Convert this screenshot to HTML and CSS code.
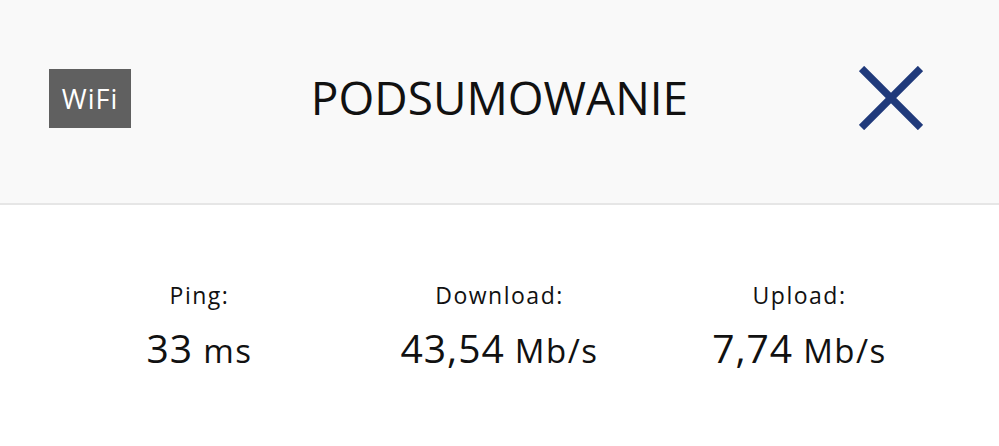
FILE: index.html
```html
<!DOCTYPE html>
<html lang="pl">
<head>
<meta charset="utf-8">
<title>Podsumowanie</title>
<link rel="stylesheet" href="styles.css">
</head>
<body>
<header class="header">
  <div class="header-left"><span class="badge">WiFi</span></div>
  <h1 class="title">PODSUMOWANIE</h1>
  <div class="header-right">
    <svg class="close" width="64" height="64" viewBox="0 0 64 64" aria-label="Zamknij">
      <path d="M2.5 2.5 L61.5 61.5 M61.5 2.5 L2.5 61.5" stroke="#203a7b" stroke-width="7.5" fill="none"/>
    </svg>
  </div>
</header>
<main class="stats">
  <div class="stat">
    <div class="label">Ping:</div>
    <div class="value"><span class="num">33</span><span class="unit">ms</span></div>
  </div>
  <div class="stat">
    <div class="label">Download:</div>
    <div class="value"><span class="num">43,54</span><span class="unit">Mb/s</span></div>
  </div>
  <div class="stat">
    <div class="label">Upload:</div>
    <div class="value"><span class="num">7,74</span><span class="unit">Mb/s</span></div>
  </div>
</main>
</body>
</html>
```
FILE: styles.css
```css
html, body {
  margin: 0;
  padding: 0;
  background: #ffffff;
  font-family: "Open Sans", "Noto Sans", sans-serif;
  color: #111111;
}

.header {
  box-sizing: border-box;
  height: 205px;
  background: #f9f9f9;
  border-bottom: 2px solid #e6e6e6;
  display: grid;
  grid-template-columns: 1fr auto 1fr;
  align-items: start;
  padding-top: 66px;
}

.header-left {
  display: flex;
  align-items: center;
  height: 64px;
  padding-left: 49px;
}

.badge {
  display: flex;
  align-items: center;
  justify-content: center;
  width: 82px;
  height: 59px;
  background: #606060;
  color: #ffffff;
  font-size: 27px;
  letter-spacing: 1px;
}

.title {
  margin: 0;
  height: 62px;
  display: flex;
  align-items: center;
  font-size: 46px;
  font-weight: 400;
  color: #111111;
}

.header-right {
  display: flex;
  justify-content: flex-end;
  padding-right: 76px;
}

.close {
  display: block;
}

.stats {
  display: grid;
  grid-template-columns: repeat(3, 300px);
  justify-content: center;
  padding-top: 75px;
}

.stat {
  display: flex;
  flex-direction: column;
  align-items: center;
}

.label {
  font-size: 23px;
  line-height: 30px;
  letter-spacing: 1.5px;
}

.value {
  margin-top: 15px;
  line-height: 46px;
  white-space: nowrap;
  display: flex;
  align-items: baseline;
  gap: 10px;
}

.num {
  font-size: 39px;
  letter-spacing: 1px;
}

.unit {
  font-size: 33px;
  letter-spacing: 1.5px;
}
```
